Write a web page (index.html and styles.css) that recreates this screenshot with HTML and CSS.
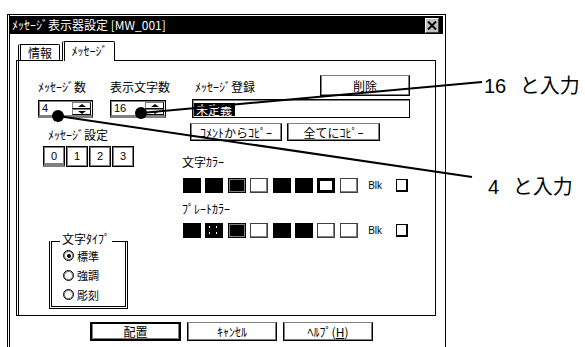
FILE: index.html
```html
<!DOCTYPE html>
<html lang="ja">

<head>
    <meta charset="UTF-8">
    <meta name="viewport" content="width=device-width, initial-scale=1.0">
    <title>ﾒｯｾｰｼﾞ表示器設定</title>
    <link rel="stylesheet" href="styles.css">
</head>

<body>
    <div class="page">
        <div class="dialog">
            <div class="titlebar">
                <span>ﾒｯｾｰｼﾞ表示器設定 [MW_001]</span>
                <span class="close">
                    <svg width="10" height="9" viewBox="0 0 10 9"><path d="M1 0.5 L9 8.5 M9 0.5 L1 8.5" stroke="#000" stroke-width="2"/></svg>
                </span>
            </div>

            <div class="tabs">
                <span class="tab">情報</span>
                <span class="tab active">ﾒｯｾｰｼﾞ</span>
            </div>

            <div class="panel">
                <div class="col-left">
                    <div class="counts">
                        <div class="field">
                            <div class="label">ﾒｯｾｰｼﾞ数</div>
                            <div class="spin spin-a">
                                <span class="val">4</span>
                                <span class="arrows"><i class="up"></i><i class="down"></i></span>
                            </div>
                        </div>
                        <div class="field">
                            <div class="label">表示文字数</div>
                            <div class="spin spin-b">
                                <span class="val">16</span>
                                <span class="arrows"><i class="up"></i><i class="down"></i></span>
                            </div>
                        </div>
                    </div>

                    <div class="label set-label">ﾒｯｾｰｼﾞ設定</div>
                    <div class="pages">
                        <span class="page-btn pressed">0</span>
                        <span class="page-btn">1</span>
                        <span class="page-btn">2</span>
                        <span class="page-btn">3</span>
                    </div>

                    <div class="group">
                        <span class="legend">文字ﾀｲﾌﾟ</span>
                        <div class="radio"><i class="dot on"></i>標準</div>
                        <div class="radio"><i class="dot"></i>強調</div>
                        <div class="radio"><i class="dot"></i>彫刻</div>
                    </div>
                </div>

                <div class="col-right">
                    <div class="reg">
                        <div class="reg-head">
                            <span class="label">ﾒｯｾｰｼﾞ登録</span>
                            <span class="btn btn-del">削除</span>
                        </div>
                        <div class="text"><span class="sel">未定義</span></div>
                        <div class="copy">
                            <span class="btn btn-copy">ｺﾒﾝﾄからｺﾋﾟｰ</span>
                            <span class="btn btn-all">全てにｺﾋﾟｰ</span>
                        </div>
                    </div>

                    <div class="label color-label">文字ｶﾗｰ</div>
                    <div class="swatches">
                        <i class="sw black"></i>
                        <i class="sw black"></i>
                        <i class="sw black bevel"></i>
                        <i class="sw"></i>
                        <i class="sw black"></i>
                        <i class="sw black"></i>
                        <i class="sw picked"></i>
                        <i class="sw"></i>
                        <span class="blk">Blk</span>
                        <i class="box"></i>
                    </div>

                    <div class="label color-label plate">ﾌﾟﾚｰﾄｶﾗｰ</div>
                    <div class="swatches plate-row">
                        <i class="sw black"></i>
                        <i class="sw black dots"></i>
                        <i class="sw black bevel"></i>
                        <i class="sw"></i>
                        <i class="sw black"></i>
                        <i class="sw black"></i>
                        <i class="sw"></i>
                        <i class="sw"></i>
                        <span class="blk">Blk</span>
                        <i class="box"></i>
                    </div>
                </div>
            </div>

            <div class="actions">
                <span class="btn btn-ok">配置</span>
                <span class="btn">ｷｬﾝｾﾙ</span>
                <span class="btn">ﾍﾙﾌﾟ(<u>H</u>)</span>
            </div>
        </div>

        <aside class="notes">
            <p class="note note-16">16 と入力</p>
            <p class="note note-4">4 と入力</p>
        </aside>

        <svg class="leaders" width="585" height="347" viewBox="0 0 585 347">
            <line x1="141" y1="113" x2="482" y2="82" stroke="#000" stroke-width="2"/>
            <line x1="58" y1="116" x2="472" y2="177" stroke="#000" stroke-width="2"/>
            <circle cx="141" cy="113" r="6"/>
            <circle cx="58" cy="116" r="6"/>
        </svg>
    </div>
</body>

</html>
```

FILE: styles.css
```css
*,
*::before,
*::after {
    box-sizing: border-box;
}

html,
body {
    margin: 0;
    background: #fff;
}

body {
    font-family: "Noto Sans CJK JP", sans-serif;
    font-size: 12px;
    color: #000;
}

.page {
    position: relative;
    width: 585px;
    height: 347px;
    overflow: hidden;
    display: flex;
    align-items: flex-start;
}

/* dialog frame */
.dialog {
    flex: none;
    margin: 14px 0 0 7px;
    width: 439px;
    height: 340px;
    border: 1px solid #000;
    border-left: 3px double #000;
    border-bottom: 0;
    padding: 1px 2px 0 0;
}

.titlebar {
    height: 18px;
    background: #000;
    color: #fff;
    display: flex;
    align-items: center;
    justify-content: space-between;
    padding: 0 4px 0 2px;
    line-height: 18px;
}

.close {
    width: 14px;
    height: 15px;
    background: #c0c0c0;
    border: 1px solid;
    border-color: #fff #404040 #404040 #fff;
    display: flex;
    align-items: center;
    justify-content: center;
}

.tabs {
    position: relative;
    z-index: 1;
    display: flex;
    align-items: flex-end;
    height: 26px;
    padding-left: 8px;
}

.tab {
    width: 42px;
    height: 16px;
    border: 1px solid #000;
    border-bottom: 0;
    border-left: 3px double #000;
    border-radius: 2px 2px 0 0;
    text-align: center;
    line-height: 15px;
}

.tab.active {
    width: 53px;
    height: 20px;
    margin-left: 2px;
    margin-bottom: -1px;
    background: #fff;
    line-height: 18px;
}

.panel {
    display: flex;
    margin-left: 6px;
    width: 420px;
    height: 256px;
    border: 1px solid #000;
    border-left: 3px double #000;
}

.label {
    line-height: 14px;
    white-space: nowrap;
}

/* left column */
.col-left {
    width: 142px;
    margin-left: 19px;
}

.counts {
    display: flex;
    gap: 17px;
    margin-top: 19px;
}

.field {
    display: flex;
    flex-direction: column;
    gap: 6px;
}

.spin {
    display: flex;
    height: 18px;
    border: 1px solid #000;
    border-bottom: 3px solid #808080;
    box-shadow: inset 1px 1px 0 #808080;
}

.spin-a {
    width: 55px;
}

.spin-b {
    width: 56px;
}

.val {
    font-family: "Liberation Sans", sans-serif;
    font-size: 11px;
    line-height: 14px;
    padding-left: 3px;
}

.arrows {
    margin-left: auto;
    margin-right: 1px;
    display: flex;
    flex-direction: column;
    width: 19px;
    padding-top: 1px;
}

.arrows i {
    position: relative;
    height: 7px;
    border: 1px solid #000;
    border-color: #808080 #000 #000 #808080;
}

.arrows i::after {
    content: '';
    position: absolute;
    left: 5px;
    top: 1px;
    border-left: 4px solid transparent;
    border-right: 4px solid transparent;
}

.arrows .up::after {
    border-bottom: 3px solid #000;
}

.arrows .down::after {
    border-top: 3px solid #000;
}

.set-label {
    margin: 10px 0 0 10px;
}

.pages {
    display: flex;
    gap: 1px;
    margin: 4px 0 0 5px;
}

.page-btn {
    width: 22px;
    height: 21px;
    border: 1px solid #000;
    box-shadow: inset 1px 1px 0 #808080, inset -1px -1px 0 #808080;
    text-align: center;
    font-family: "Liberation Sans", sans-serif;
    font-size: 11px;
    line-height: 18px;
}

.page-btn.pressed {
    border-bottom: 3px solid #808080;
}

.group {
    margin: 74px 0 0 11px;
    width: 79px;
    height: 68px;
    border: 3px double #000;
    border-top: 1px solid #000;
    font-size: 11px;
}

.legend {
    display: table;
    margin: -10px 0 0 8px;
    padding: 0 2px;
    background: #fff;
    font-size: 12px;
    line-height: 14px;
}

.radio {
    display: flex;
    align-items: center;
    gap: 3px;
    height: 19.5px;
    padding-left: 11px;
    line-height: 14px;
}

.dot {
    position: relative;
    width: 11px;
    height: 11px;
    border: 1px solid #000;
    border-radius: 50%;
    box-shadow: inset 0 0 0 1px #808080;
}

.dot.on::after {
    content: '';
    position: absolute;
    left: 2.5px;
    top: 2.5px;
    width: 4px;
    height: 4px;
    border-radius: 50%;
    background: #000;
}

/* right column */
.col-right {
    width: 230px;
}

.reg {
    margin-left: 10px;
    width: 220px;
}

.reg-head {
    display: flex;
    align-items: center;
    justify-content: space-between;
    margin-top: 14px;
}

.reg-head .label {
    padding-left: 5px;
    padding-top: 3px;
}

.btn {
    display: flex;
    align-items: center;
    justify-content: center;
    height: 19px;
    border: 1px solid #000;
    border-top-color: #808080;
    box-shadow: inset 1px 0 0 #808080, inset -1px -1px 0 #808080;
    background: #fff;
    white-space: nowrap;
}

.btn-del {
    width: 90px;
    height: 21px;
}

.text {
    margin: 3px 0 0 2px;
    height: 19px;
    border: 1px solid #000;
    box-shadow: inset 1px 1px 0 #808080;
    padding: 1px 0 0 1px;
}

.sel {
    display: inline-block;
    background: #000;
    color: #fff;
    line-height: 13px;
    padding: 0 3px 0 2px;
}

.copy {
    display: flex;
    gap: 5px;
    margin-top: 5px;
}

.btn-copy {
    width: 92px;
    height: 18px;
}

.btn-all {
    width: 93px;
    height: 18px;
}

.color-label {
    margin: 14px 0 0 2px;
}

.color-label.plate {
    margin-top: 9px;
}

.swatches {
    display: flex;
    align-items: center;
    gap: 4.4px;
    height: 15px;
    margin: 9px 0 0 3px;
}

.swatches.plate-row {
    margin-top: 7px;
}

.sw {
    width: 18px;
    height: 15px;
    border: 1px solid #404040;
    box-shadow: inset -1px -1px 0 #808080;
    background: #fff;
}

.sw.black {
    background: #000;
    border-color: #000;
    box-shadow: none;
}

.sw.bevel {
    box-shadow: inset 1px 1px 0 #808080, inset -1px -1px 0 #808080;
}

.sw.dots {
    background-image: radial-gradient(#fff 0.7px, transparent 1px);
    background-size: 7px 6px;
}

.sw.picked {
    border: 3px solid #000;
    box-shadow: none;
}

.blk {
    margin-left: 6px;
    font-family: "Liberation Sans", sans-serif;
    font-size: 10px;
}

.box {
    margin-left: 10px;
    width: 12px;
    height: 13px;
    border: 1px solid #000;
    border-right-width: 2px;
    border-bottom-width: 2px;
}

/* bottom buttons */
.actions {
    display: flex;
    gap: 6px;
    margin-top: 6px;
    padding-left: 80px;
}

.actions .btn {
    width: 90px;
}

.actions .btn-ok {
    width: 91px;
    border: 2px solid #000;
}

/* annotations */
.notes {
    flex: none;
    margin-left: 38px;
    font-family: "Liberation Sans", "Noto Sans CJK JP", sans-serif;
    font-size: 20px;
    word-spacing: 8px;
}

.note {
    margin: 0;
    line-height: 24px;
    white-space: nowrap;
}

.note-16 {
    margin-top: 74px;
}

.note-4 {
    margin: 77px 0 0 4px;
}

.leaders {
    position: absolute;
    left: 0;
    top: 0;
    pointer-events: none;
}
```
